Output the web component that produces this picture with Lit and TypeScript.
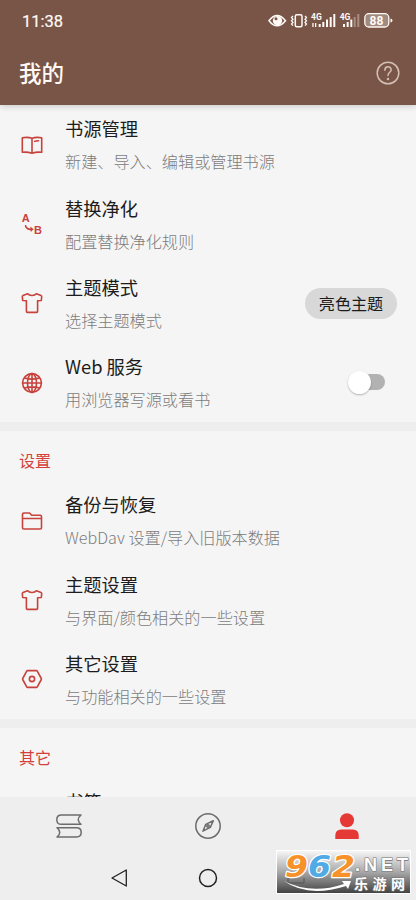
import { LitElement, html, css, svg, nothing } from "lit";
import { customElement, property } from "lit/decorators.js";

const icons: Record<string, unknown> = {
  book: svg`<path d="M11 4.200C8 3.200 4.500 3.300 1.300 3.700V18.300C5 17.900 8 18.200 11 19.200C14 18.200 17 17.900 20.700 18.300V3.700C17.500 3.300 14 3.200 11 4.200V19M13.800 7.300L17.500 6.800"/>`,
  replace: svg`<path stroke-width="1.7" d="M4.600 12.800C5 15 7.500 16.800 10 16.400"/><path fill="currentColor" stroke="none" d="M9.300 13.600L12.600 16.300L9.800 19z"/><text class="ab" x="0.800" y="9">A</text><text class="ab" x="13" y="20.500">B</text>`,
  shirt: svg`<path d="M6.700 1.700L1.900 3.600Q1.200 4 1.300 4.900L1.700 8.500L5.400 8.800V19.300Q5.400 20.400 6.500 20.400H15.500Q16.600 20.400 16.600 19.300V8.800L20.300 8.500L20.700 4.900Q20.800 4 20.100 3.600L15.300 1.700C14.500 3 12.900 3.500 11 3.500S7.500 3 6.700 1.700z"/>`,
  globe: svg`<circle cx="11" cy="11" r="9.400"/><ellipse cx="11" cy="11" rx="4.500" ry="9.400"/><path d="M11 1.600V20.400M1.600 11H20.400M3.600 6Q11 8.300 18.400 6M3.600 16Q11 13.700 18.400 16"/>`,
  folder: svg`<path d="M1.500 8.500V4.300Q1.500 3 2.800 3H8.600L10.700 5.200H19.200Q20.500 5.200 20.500 6.500V17.700Q20.500 19 19.200 19H2.800Q1.500 19 1.500 17.700V8.500H20.500"/>`,
  hex: svg`<path d="M6.600 2.600H15.400Q16 2.600 16.300 3.100L20.300 10.500Q20.600 11 20.300 11.500L16.300 18.900Q16 19.400 15.400 19.400H6.600Q6 19.400 5.700 18.900L1.700 11.500Q1.400 11 1.700 10.500L5.700 3.100Q6 2.600 6.600 2.600z"/><circle cx="11" cy="11" r="2.600"/>`,
};

@customElement("setting-row")
class SettingRow extends LitElement {
  @property() icon = "";
  @property() heading = "";
  @property() summary = "";
  static styles = css`
    :host { display: flex; align-items: center; height: 79.200px; padding: 0 19px 0 21px; box-sizing: border-box; flex: none; }
    svg { width: 22px; height: 22px; margin-right: 22px; flex: none; color: #c8423c; fill: none; stroke: currentColor; stroke-width: 1.600; stroke-linejoin: round; stroke-linecap: round; overflow: visible; }
    .ab { font: bold 11px "Liberation Sans", sans-serif; fill: currentColor; stroke: none; }
    .copy { flex: 1; white-space: nowrap; padding-top: 1px; }
    .heading { font-size: 18.300px; line-height: 32px; color: #1c1c1c; }
    .summary { font-size: 16.150px; line-height: 34px; min-height: 34px; color: #7c7c7c; font-weight: 300; }
  `;
  render() {
    return html`
      ${this.icon ? html`<svg viewBox="0 0 22 22">${icons[this.icon]}</svg>` : nothing}
      <div class="copy"><div class="heading">${this.heading}</div><div class="summary">${this.summary}</div></div>
      <slot></slot>`;
  }
}

@customElement("app-root")
class AppRoot extends LitElement {
  static styles = css`
    :host { display: flex; flex-direction: column; width: 416px; height: 900px; overflow: hidden; position: relative; background: #f5f5f5; font-family: "Noto Sans CJK SC", sans-serif; }
    .top { height: 105px; flex: none; background: #795548; color: #fffaf5; box-shadow: 0 1px 7px #0003; z-index: 1; }
    .status { height: 41px; display: flex; align-items: center; justify-content: space-between; padding: 0 22px; }
    .clock { font: 16.500px Roboto, sans-serif; -webkit-text-stroke: .2px; padding-top: 1px; }
    .status svg { width: 126px; height: 18px; }
    .bar { height: 64px; display: flex; align-items: center; justify-content: space-between; padding: 0 16px 0 19px; }
    .title { font-size: 22.500px; line-height: 32px; font-weight: 500; padding-bottom: 2px; }
    .help { width: 24px; height: 24px; }
    .list { flex: 1; overflow: hidden; display: flex; flex-direction: column; padding-top: .4px; }
    .gap { height: 9px; background: #eee; flex: none; }
    .label { height: 50.200px; line-height: 58px; padding-left: 19px; font-size: 16px; color: #d3403c; flex: none; }
    .chip { width: 92px; height: 31px; border-radius: 16px; background: #d8d8d8; color: #1c1c1c; font-size: 16.100px; line-height: 30px; text-align: center; }
    .switch { width: 24px; height: 16px; border-radius: 8px; background: #b2b2b2; margin: 0 12px 1px 0; position: relative; }
    .knob { position: absolute; width: 23px; height: 23px; border-radius: 50%; background: #fff; left: -13px; top: -3.500px; box-shadow: 0 1px 2px #0004; }
    .bottom { height: 103px; flex: none; background: #eee; z-index: 1; }
    .tabs { height: 59px; display: grid; grid-template-columns: repeat(3, 1fr); place-items: center; }
    .tabs svg { width: 28px; height: 28px; margin-bottom: 1px; }
    .keys { height: 44px; display: flex; align-items: center; justify-content: center; gap: 69px; padding-right: 89px; box-sizing: border-box; }
    .keys svg { width: 20px; height: 20px; }
    .brand { position: absolute; left: 276px; top: 850px; width: 135px; height: 44px; z-index: 2; }
    .n { font: italic bold 31px "DejaVu Sans", sans-serif; paint-order: stroke; stroke: #fff; stroke-width: 2.500px; stroke-linejoin: round; }
    .net { font: bold 18px "Liberation Sans", sans-serif; }
    .cn { font: bold 14px "Noto Sans CJK SC", sans-serif; }
    .pale { fill: #fff; paint-order: stroke; stroke: #747474; stroke-width: 1.200px; }
    .sig { font: bold 8.500px Roboto, sans-serif; }
    .pct { font: bold 12px Roboto, sans-serif; }
  `;
  render() {
    return html`
      <header class="top">
        <div class="status">
          <span class="clock">11:38</span>
          <svg viewBox="268 12 126 18" fill="#fffaf5">
            <path d="M269 20.700Q277 10.500 285.500 20.700Q277 31 269 20.700z" fill="none" stroke="#fffaf5" stroke-width="1.500"/>
            <circle cx="277.500" cy="20.700" r="4.700"/><circle cx="276" cy="18.700" r="1.500" fill="#795548"/>
            <rect x="295.300" y="14.700" width="6.700" height="12" rx="1.500" fill="none" stroke="#fffaf5" stroke-width="1.500"/>
            <path d="M293 16l-1.500 1.600 1.500 1.600-1.500 1.600 1.500 1.600-1.500 1.600 1.500 1.600M305 16l1.500 1.600-1.500 1.600 1.500 1.600-1.500 1.600 1.500 1.600-1.500 1.600" fill="none" stroke="#fffaf5" stroke-width="1.300"/>
            <text class="sig" x="311" y="20.300">4G</text>
            <path d="M312.300 23h1.300v4h-1.300zM315 23h1.300v4h-1.300zM318.700 24h2v3h-2zM322.300 22h2v5h-2zM326 19.500h2v7.500h-2zM329.700 17h2v10h-2zM333.300 14h2v13h-2z"/>
            <text class="sig" x="339.700" y="20.300">4G</text>
            <path d="M343 24h2v3h-2zM346.700 22h2v5h-2zM350.300 19.500h2v7.500h-2z"/>
            <path opacity=".35" d="M353.700 17h2v10h-2zM357.300 14h2v13h-2z"/>
            <rect x="364.800" y="13.700" width="24" height="13.300" rx="4" fill="#a18a7f" stroke="#fffaf5" stroke-width="1.300"/>
            <path d="M390.500 18.500q2 .3 2 2t-2 2z"/>
            <text class="pct" x="369.500" y="24.700" textLength="14">88</text>
          </svg>
        </div>
        <div class="bar">
          <span class="title">我的</span>
          <svg class="help" viewBox="0 0 24 24" fill="none" stroke="#d3bfb4" stroke-width="1.500" stroke-linecap="round"><circle cx="12" cy="12" r="10.800"/><path d="M8.900 9.200C8.900 4.700 15.200 4.900 15.200 8.800C15.200 11.200 12 11.500 12 14.500"/><circle cx="12" cy="17.900" r=".5"/></svg>
        </div>
      </header>
      <main class="list">
        <setting-row icon="book" heading="书源管理" summary="新建、导入、编辑或管理书源"></setting-row>
        <setting-row icon="replace" heading="替换净化" summary="配置替换净化规则"></setting-row>
        <setting-row icon="shirt" heading="主题模式" summary="选择主题模式"><div class="chip">亮色主题</div></setting-row>
        <setting-row icon="globe" heading="Web 服务" summary="用浏览器写源或看书"><div class="switch"><div class="knob"></div></div></setting-row>
        <div class="gap"></div>
        <div class="label">设置</div>
        <setting-row icon="folder" heading="备份与恢复" summary="WebDav 设置/导入旧版本数据"></setting-row>
        <setting-row icon="shirt" heading="主题设置" summary="与界面/颜色相关的一些设置"></setting-row>
        <setting-row icon="hex" heading="其它设置" summary="与功能相关的一些设置"></setting-row>
        <div class="gap"></div>
        <div class="label">其它</div>
        <setting-row icon="book" heading="书签" summary=""></setting-row>
      </main>
      <footer class="bottom">
        <nav class="tabs">
          <svg viewBox="0 0 28 28" fill="none" stroke="#6c6c6c" stroke-width="1.500" stroke-linejoin="round"><path d="M26 3H6.500Q1.800 3 1.800 7.700T6.500 12.300H26Q20.500 7.600 26 3zM2 15.700H21.500Q26.200 15.700 26.200 20.300T21.500 25H2Q7.500 20.400 2 15.700z"/></svg>
          <svg viewBox="0 0 28 28" fill="none" stroke="#6c6c6c" stroke-width="1.500" stroke-linejoin="round"><circle cx="14" cy="14" r="12.200"/><path d="M19.300 8.700L16.300 15.400L8.900 19.200L11.800 12.400z"/><circle cx="14" cy="14" r="1.200"/></svg>
          <svg viewBox="0 0 28 28" fill="#e53935"><circle cx="14" cy="8.200" r="7"/><path d="M2.300 27V23.500Q2.300 17.500 8.300 17.500H19.700Q25.700 17.500 25.700 23.500V27z"/></svg>
        </nav>
        <div class="keys">
          <svg viewBox="0 0 20 20" fill="none" stroke="#222" stroke-width="1.300" stroke-linejoin="round"><path d="M17.300 2V18L3 10z"/></svg>
          <svg viewBox="0 0 20 20" fill="none" stroke="#222" stroke-width="1.500"><circle cx="10" cy="10" r="8.500"/></svg>
        </div>
      </footer>
      <svg class="brand" viewBox="0 0 135 44">
        <defs><linearGradient id="g" x2="0" y2="1"><stop stop-color="#f8f8f8"/><stop offset=".5" stop-color="#a8a8a8"/><stop offset="1" stop-color="#404040"/></linearGradient></defs>
        <rect x=".5" y=".5" width="134" height="43" fill="url(#g)" stroke="#fff"/>
        <path d="M12 28v5h16v-5" fill="none" stroke="#555"/>
        <path d="M8 31Q35 45 68 34L66 31L75 31L72 39L70 36Q32 48 8 31z" fill="#fff"/>
        <text class="n" x="9" y="27" textLength="23" lengthAdjust="spacingAndGlyphs" fill="#f7922b">9</text>
        <text class="n" x="32" y="27" textLength="23" lengthAdjust="spacingAndGlyphs" fill="#50aae6">6</text>
        <text class="n" x="56" y="27" textLength="23" lengthAdjust="spacingAndGlyphs" fill="#f7922b">2</text>
        <text class="net pale" x="79" y="21" textLength="53" lengthAdjust="spacing">.NET</text>
        <text class="cn pale" x="78" y="38.500" textLength="51">乐游网</text>
      </svg>`;
  }
}
